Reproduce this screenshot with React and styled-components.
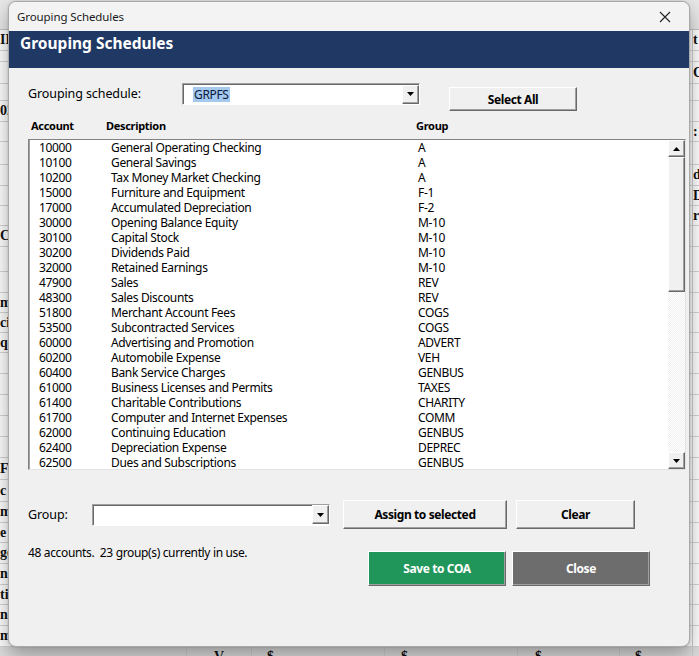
import React from "react";
import styled, { createGlobalStyle, css } from "styled-components";

const GlobalStyle = createGlobalStyle`
  html, body {
    margin: 0;
    padding: 0;
  }
  body {
    width: 699px;
    height: 656px;
    overflow: hidden;
    background: #ffffff;
    font-family: "Noto Sans", "Liberation Sans", sans-serif;
  }
`;

const UI_FONT = `"Noto Sans", "Liberation Sans", sans-serif`;

/* ---------- spreadsheet behind the dialog ---------- */

const Screen = styled.div`
  position: relative;
  width: 699px;
  height: 656px;
  overflow: hidden;
  background: #ffffff;
`;

const Sheet = styled.div`
  display: flex;
  flex-direction: column;
`;

const SheetTop = styled.div`
  height: 30px;
  background: #e9e9e9;
  border-bottom: 1px solid #c6c6c6;
  box-sizing: border-box;
`;

const SheetRow = styled.div`
  display: flex;
  height: ${(p) => p.$h}px;
  border-bottom: 1px solid #d4d4d4;
  box-sizing: border-box;
  font-family: "Liberation Serif", serif;
  font-weight: bold;
  font-size: 14px;
  color: #111;
  line-height: ${(p) => p.$h - 1}px;
  ${(p) =>
    p.$shade &&
    css`
      background: #dcdcdc;
    `}
`;

const SheetCell = styled.div`
  flex: ${(p) => (p.$w ? `0 0 ${p.$w}px` : "1")};
  overflow: hidden;
  white-space: pre;
  box-sizing: border-box;
  padding-left: ${(p) => p.$pad || 0}px;
  text-align: ${(p) => p.$align || "left"};
  ${(p) =>
    p.$line &&
    css`
      border-left: 1px solid #cfcfcf;
    `}
`;

/* ---------- dialog window ---------- */

const Window = styled.div`
  position: absolute;
  left: 8px;
  top: 1px;
  width: 682px;
  height: 646px;
  box-sizing: border-box;
  border: 1px solid #a9a9a9;
  border-radius: 8px;
  overflow: hidden;
  background: #f0f0f0;
  box-shadow: 0 8px 20px rgba(0, 0, 0, 0.34), 0 0 2px rgba(0, 0, 0, 0.2);
  display: flex;
  flex-direction: column;
  font-family: ${UI_FONT};
  color: #000;
`;

const TitleBar = styled.div`
  height: 29px;
  flex: 0 0 29px;
  display: flex;
  align-items: center;
  justify-content: space-between;
  background: #f3f3f3;
  padding-left: 8px;
`;

const TitleText = styled.span`
  font-size: 11.5px;
  letter-spacing: -0.1px;
  color: #1a1a1a;
`;

const CloseBox = styled.div`
  width: 46px;
  height: 29px;
  display: flex;
  align-items: center;
  justify-content: center;
  margin-right: 1px;
`;

const Banner = styled.div`
  height: 37px;
  flex: 0 0 37px;
  box-sizing: border-box;
  background: #1f3864;
  color: #ffffff;
  font-weight: bold;
  font-size: 15.5px;
  line-height: 22px;
  padding: 1px 0 0 11px;
`;

const Body = styled.div`
  flex: 1;
  padding: 0 20px 0 19px;
  display: flex;
  flex-direction: column;
  font-size: 12px;
  letter-spacing: -0.35px;
`;

const FieldRow = styled.div`
  display: flex;
  align-items: ${(p) => p.$align || "flex-start"};
  margin-top: ${(p) => p.$top}px;
`;

const FieldLabel = styled.div`
  flex: 0 0 ${(p) => p.$width}px;
  line-height: 22px;
  font-size: 12.5px;
  letter-spacing: -0.1px;
`;

const raised = css`
  border: 1px solid;
  border-color: #ffffff #696969 #696969 #ffffff;
  box-shadow: inset -1px -1px 0 #a0a0a0;
`;

const Combo = styled.div`
  width: ${(p) => p.$width}px;
  height: 22px;
  box-sizing: border-box;
  background: #ffffff;
  border: 1px solid;
  border-color: #a0a0a0 #ffffff #ffffff #a0a0a0;
  box-shadow: inset 1px 1px 0 #696969;
  display: flex;
  align-items: center;
  justify-content: space-between;
  padding: 1px 0 1px 10px;
`;

const Selected = styled.span`
  background: #a5c8ee;
  color: #0b1b3a;
  font-size: 12px;
  line-height: 15px;
  padding: 0 1px;
`;

const DropButton = styled.div`
  width: 17px;
  height: 19px;
  box-sizing: border-box;
  background: #f0f0f0;
  ${raised};
  display: flex;
  align-items: center;
  justify-content: center;
`;

const Button = styled.button`
  width: ${(p) => p.$width}px;
  height: ${(p) => p.$height}px;
  margin-left: ${(p) => p.$left || 0}px;
  margin-top: ${(p) => p.$top || 0}px;
  padding: 0;
  font-family: ${UI_FONT};
  font-size: 12px;
  font-weight: bold;
  letter-spacing: -0.4px;
  color: #000;
  background: #f0f0f0;
  ${raised};
  ${(p) =>
    p.$tone === "green" &&
    css`
      background: #21965a;
      color: #ffffff;
    `}
  ${(p) =>
    p.$tone === "gray" &&
    css`
      background: #6d6d6d;
      color: #ffffff;
    `}
`;

const ListHeader = styled.div`
  display: grid;
  grid-template-columns: 75px 310px 1fr;
  padding-left: 3px;
  margin-top: 7px;
  line-height: 16px;
  font-size: 11px;
  letter-spacing: -0.3px;
  font-weight: bold;
`;

const ListBox = styled.div`
  margin-top: 5px;
  width: 658px;
  height: 331px;
  box-sizing: border-box;
  background: #ffffff;
  border: 1px solid;
  border-color: #828282 #e3e3e3 #e3e3e3 #828282;
  box-shadow: inset 1px 0 0 #a0a0a0;
  display: flex;
  overflow: hidden;
`;

const Rows = styled.div`
  flex: 1;
  padding-left: 10px;
`;

const Row = styled.div`
  display: grid;
  grid-template-columns: 72px 307px 1fr;
  height: 15px;
  line-height: 15px;
  font-size: 12px;
  white-space: nowrap;
`;

const ScrollBar = styled.div`
  flex: 0 0 17px;
  display: flex;
  flex-direction: column;
  background: repeating-conic-gradient(#f0f0f0 0 25%, #ffffff 0 50%) 0 0 / 2px 2px;
`;

const ScrollButton = styled.div`
  height: 17px;
  flex: 0 0 17px;
  box-sizing: border-box;
  background: #f0f0f0;
  ${raised};
  display: flex;
  align-items: center;
  justify-content: center;
`;

const Thumb = styled.div`
  height: 135px;
  flex: 0 0 135px;
  box-sizing: border-box;
  background: #f0f0f0;
  ${raised};
`;

const Track = styled.div`
  flex: 1;
`;

const Status = styled.div`
  flex: 0 0 340px;
  line-height: 16px;
  font-size: 12px;
`;

const Arrow = ({ up }) => (
  <svg width="7" height="4" viewBox="0 0 7 4">
    <path d={up ? "M0 4h7L3.5 0z" : "M0 0h7L3.5 4z"} fill="#000" />
  </svg>
);

const CloseIcon = () => (
  <svg width="12" height="12" viewBox="0 0 12 12">
    <path d="M1 1L11 11M11 1L1 11" stroke="#222" strokeWidth="1.1" fill="none" />
  </svg>
);

const accounts = [
  ["10000", "General Operating Checking", "A"],
  ["10100", "General Savings", "A"],
  ["10200", "Tax Money Market Checking", "A"],
  ["15000", "Furniture and Equipment", "F-1"],
  ["17000", "Accumulated Depreciation", "F-2"],
  ["30000", "Opening Balance Equity", "M-10"],
  ["30100", "Capital Stock", "M-10"],
  ["30200", "Dividends Paid", "M-10"],
  ["32000", "Retained Earnings", "M-10"],
  ["47900", "Sales", "REV"],
  ["48300", "Sales Discounts", "REV"],
  ["51800", "Merchant Account Fees", "COGS"],
  ["53500", "Subcontracted Services", "COGS"],
  ["60000", "Advertising and Promotion", "ADVERT"],
  ["60200", "Automobile Expense", "VEH"],
  ["60400", "Bank Service Charges", "GENBUS"],
  ["61000", "Business Licenses and Permits", "TAXES"],
  ["61400", "Charitable Contributions", "CHARITY"],
  ["61700", "Computer and Internet Expenses", "COMM"],
  ["62000", "Continuing Education", "GENBUS"],
  ["62400", "Depreciation Expense", "DEPREC"],
  ["62500", "Dues and Subscriptions", "GENBUS"],
];

// [row height, left text, right text]
const sheetRows = [
  [21, "IF", "t"],
  [11, "", ""],
  [22, "", "C"],
  [17, "", ""],
  [21, "02", ""],
  [20, "", ":1"],
  [23, "", ""],
  [21, "", "d"],
  [20, "", "De"],
  [20, "", "r"],
  [21, "Cl", ""],
  [25, "", ""],
  [21, "   C", ""],
  [20, "m", ""],
  [20, "ci", ""],
  [20, "qu", ""],
  [21, "", ""],
  [21, "", ""],
  [21, "", ""],
  [21, "", ""],
  [21, "", ""],
  [22, "Fe", ""],
  [22, "c", ""],
  [21, "m", ""],
  [20, "e", ""],
  [21, "ge", ""],
  [21, "n", ""],
  [20, "ti", ""],
  [21, "ne", ""],
  [21, "m", ""],
];

export default function App() {
  return (
    <>
      <GlobalStyle />
      <Screen>
        <Sheet>
          <SheetTop />
          {sheetRows.map(([h, left, right], i) => (
            <SheetRow key={i} $h={h}>
              <SheetCell>{left}</SheetCell>
              <SheetCell $w={7} $line>
                {right}
              </SheetCell>
            </SheetRow>
          ))}
          <SheetRow $h={21} $shade>
            <SheetCell $w={186} />
            <SheetCell $w={65} $line $align="center">
              V
            </SheetCell>
            <SheetCell $w={133} $line $pad={15}>
              $
            </SheetCell>
            <SheetCell $w={133} $line $pad={16}>
              $
            </SheetCell>
            <SheetCell $w={102} $line $pad={17}>
              $
            </SheetCell>
            <SheetCell $w={73} $line $pad={15}>
              $
            </SheetCell>
            <SheetCell $line />
          </SheetRow>
        </Sheet>

        <Window>
          <TitleBar>
            <TitleText>Grouping Schedules</TitleText>
            <CloseBox>
              <CloseIcon />
            </CloseBox>
          </TitleBar>
          <Banner>Grouping Schedules</Banner>

          <Body>
            <FieldRow $top={15}>
              <FieldLabel $width={154}>Grouping schedule:</FieldLabel>
              <Combo $width={238}>
                <Selected>GRPFS</Selected>
                <DropButton>
                  <Arrow />
                </DropButton>
              </Combo>
              <Button $width={128} $height={24} $left={29} $top={4}>
                Select All
              </Button>
            </FieldRow>

            <ListHeader>
              <span>Account</span>
              <span>Description</span>
              <span>Group</span>
            </ListHeader>

            <ListBox>
              <Rows>
                {accounts.map(([acct, desc, group]) => (
                  <Row key={acct}>
                    <span>{acct}</span>
                    <span>{desc}</span>
                    <span>{group}</span>
                  </Row>
                ))}
              </Rows>
              <ScrollBar>
                <ScrollButton>
                  <Arrow up />
                </ScrollButton>
                <Thumb />
                <Track />
                <ScrollButton>
                  <Arrow />
                </ScrollButton>
              </ScrollBar>
            </ListBox>

            <FieldRow $top={30} $align="center">
              <FieldLabel $width={64}>Group:</FieldLabel>
              <Combo $width={238}>
                <span />
                <DropButton>
                  <Arrow />
                </DropButton>
              </Combo>
              <Button $width={164} $height={29} $left={13}>
                Assign to selected
              </Button>
              <Button $width={119} $height={29} $left={9}>
                Clear
              </Button>
            </FieldRow>

            <FieldRow $top={16}>
              <Status>48 accounts.&nbsp; 23 group(s) currently in use.</Status>
              <Button $width={138} $height={35} $top={6} $tone="green">
                Save to COA
              </Button>
              <Button $width={138} $height={35} $top={6} $left={6} $tone="gray">
                Close
              </Button>
            </FieldRow>
          </Body>
        </Window>
      </Screen>
    </>
  );
}
